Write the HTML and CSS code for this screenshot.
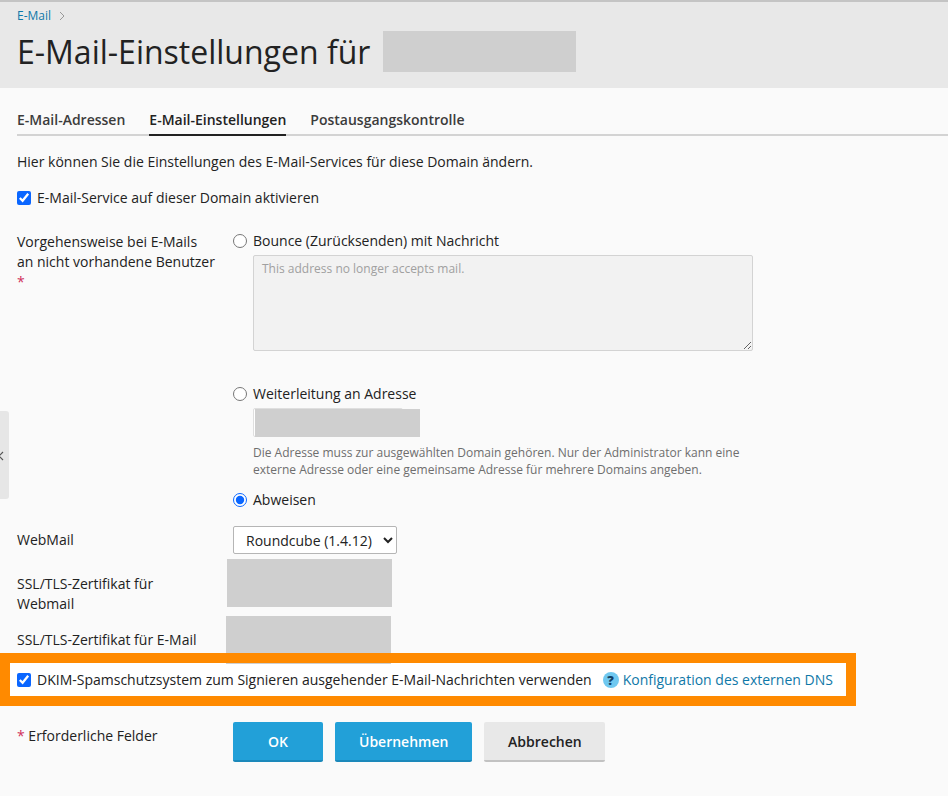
FILE: index.html
```html
<!DOCTYPE html>
<html lang="de">
<head>
<meta charset="utf-8">
<title>E-Mail-Einstellungen</title>
<link rel="stylesheet" href="styles.css">
</head>
<body>
<header class="head">
  <nav class="crumbs"><a href="#">E-Mail</a><svg class="chev" width="6" height="10" viewBox="0 0 6 10"><path d="M1 1 5 5 1 9" fill="none" stroke="#999" stroke-width="1"/></svg></nav>
  <div class="title-row"><h1>E-Mail-Einstellungen für</h1><span class="redact redact-title"></span></div>
</header>
<div class="side-handle"><svg width="6" height="10" viewBox="0 0 6 10"><path d="M3 1 -1 5l4 4" fill="none" stroke="#555" stroke-width="1.200"/></svg></div>
<main class="content">
  <div class="tabs">
    <a class="tab" href="#">E-Mail-Adressen</a>
    <a class="tab active" href="#">E-Mail-Einstellungen</a>
    <a class="tab" href="#">Postausgangskontrolle</a>
  </div>
  <p class="intro">Hier können Sie die Einstellungen des E-Mail-Services für diese Domain ändern.</p>
  <label class="check-line"><input type="checkbox" checked><span>E-Mail-Service auf dieser Domain aktivieren</span></label>

  <div class="row row-policy">
    <div class="label">Vorgehensweise bei E-Mails an nicht vorhandene Benutzer <span class="req req-block">*</span></div>
    <div class="field">
      <label class="radio"><input type="radio" name="p"><span>Bounce (Zurücksenden) mit Nachricht</span></label>
      <textarea class="msg" disabled placeholder="This address no longer accepts mail."></textarea>
      <label class="radio radio-fwd"><input type="radio" name="p"><span>Weiterleitung an Adresse</span></label>
      <div class="addr"><div class="redact redact-addr"></div></div>
      <p class="hint">Die Adresse muss zur ausgewählten Domain gehören. Nur der Administrator kann eine externe Adresse oder eine gemeinsame Adresse für mehrere Domains angeben.</p>
      <label class="radio radio-rej"><input type="radio" name="p" checked><span>Abweisen</span></label>
    </div>
  </div>

  <div class="row row-webmail">
    <div class="label">WebMail</div>
    <div class="field"><select class="select"><option>Roundcube (1.4.12)</option></select></div>
  </div>
  <div class="row row-ssl1">
    <div class="label">SSL/TLS-Zertifikat für Webmail</div>
    <div class="field"><div class="redact redact-ssl1"></div></div>
  </div>
  <div class="row row-ssl2">
    <div class="label">SSL/TLS-Zertifikat für E-Mail</div>
    <div class="field"><div class="redact redact-ssl2"></div></div>
  </div>

  <div class="dkim">
    <label class="check-line"><input type="checkbox" checked><span>DKIM-Spamschutzsystem zum Signieren ausgehender E-Mail-Nachrichten verwenden</span></label>
    <span class="help">?</span><a class="dns" href="#">Konfiguration des externen DNS</a>
  </div>

  <div class="row row-actions">
    <div class="label"><span class="req">*</span> Erforderliche Felder</div>
    <div class="buttons">
      <button class="btn primary ok">OK</button>
      <button class="btn primary">Übernehmen</button>
      <button class="btn cancel">Abbrechen</button>
    </div>
  </div>
</main>
</body>
</html>
```
FILE: styles.css
```css
* { box-sizing: border-box; }
html, body { margin: 0; padding: 0; }
body {
  width: 948px; height: 796px; overflow: hidden; position: relative;
  background: #fafafa; color: #222;
  font: 14px/20px "Open Sans", sans-serif;
}
a { color: #0f78a8; text-decoration: none; }
.head {
  height: 88px; background: #e8e8e8; border-top: 2px solid #c4c4c4;
  padding: 6px 17px 0;
}
.crumbs { display: flex; align-items: center; gap: 8px; font-size: 12px; line-height: 16px; height: 16px; }
.title-row { display: flex; align-items: flex-start; margin-top: 7px; }
h1 { margin: 0; font-size: 32px; line-height: 41px; font-weight: 400; color: #222; white-space: nowrap; }
.redact { background: #cfcfcf; }
.redact-title { width: 193px; height: 41px; margin-left: 13px; }
.side-handle {
  position: absolute; left: 0; top: 411px; width: 9px; height: 88px;
  background: #e6e6e6; border-radius: 0 3px 3px 0;
  display: flex; align-items: center;
}
.side-handle svg { margin-left: 0; margin-top: 2px; }
.content { padding-top: 20px; }
.tabs {
  display: flex; gap: 24px; margin: 0 0 0 17px; height: 28px;
  border-bottom: 2px solid #d3d3d3;
}
.tab {
  height: 28px; color: #3c3c3c; font-weight: 600; font-size: 14px; line-height: 24px;
  white-space: nowrap;
}
.tab.active { color: #222; border-bottom: 2px solid #222; }
.intro { margin: 16px 17px 0; height: 20px; }
.check-line { display: flex; align-items: center; gap: 6px; white-space: nowrap; }
input[type=checkbox] { margin: 0; width: 14px; height: 14px; flex: none; accent-color: #0a66ff; }
.content > .check-line { margin: 16px 17px 0; }
.row { display: grid; grid-template-columns: 216px 1fr; padding-left: 17px; }
.label { width: 199px; }
.row-policy { margin-top: 23px; }
.row-policy .label { padding-top: 1px; }
.req { color: #d0315c; }
.req-block { display: block; }
.radio { display: flex; align-items: center; gap: 6px; height: 20px; white-space: nowrap; }
input[type=radio] { margin: 0; width: 14px; height: 14px; flex: none; accent-color: #0a66ff; }
.msg {
  display: block; width: 500px; height: 96px; margin: 4px 0 0 20px; padding: 5px 8px;
  background: #f2f2f2; border: 1px solid #d3d3d3; border-radius: 2px;
  font: 12px/16px "Open Sans", sans-serif; color: #8a8a8a;
}
.msg::placeholder { color: #a0a0a0; opacity: 1; }
.radio-fwd { margin-top: 33px; }
.addr {
  position: relative; width: 150px; height: 29px; margin: 4px 0 0 20px;
  background: #fff; border: 1px solid #dfdfdf; border-radius: 2px;
}
.redact-addr { position: absolute; left: 1px; top: 0; width: 165px; height: 28px; }
.hint { margin: 7px 0 0 20px; width: 500px; font-size: 12px; line-height: 17px; color: #6e6e6e; }
.radio-rej { margin-top: 12px; }
.row-webmail { margin-top: 16px; height: 28px; }
.row-webmail .label { padding-top: 4px; }
.select {
  width: 164px; height: 28px; padding: 0 0 0 8px; margin: 0;
  background: #fff; border: 1px solid #b5b5b5; border-radius: 2px;
  font: 14px "Open Sans", sans-serif; color: #222;
}
.row-ssl1 { margin-top: 5px; height: 48px; }
.row-ssl1 .label { padding-top: 15px; width: 170px; }
.redact-ssl1 { width: 165px; height: 48px; margin-left: -6px; }
.row-ssl2 { margin-top: 9px; height: 37px; }
.row-ssl2 .label { padding-top: 14px; white-space: nowrap; }
.redact-ssl2 { width: 165px; height: 48px; margin-left: -7px; }
.dkim {
  position: relative; display: flex; align-items: center;
  width: 856px; height: 53px; border: 10px solid #ff8a00; background: #fff;
  padding-left: 7px;
}
.dkim::before {
  content: ""; position: absolute; left: 216px; top: 0; width: 165px; height: 1px; background: #cfcfcf;
}
.help {
  width: 16px; height: 16px; border-radius: 50%; margin: 0 4px 0 11px; flex: none;
  background: #6fc8f0; color: #123f66; font-size: 13px; line-height: 16px; font-weight: 800; text-align: center;
}
.dns { white-space: nowrap; }
.row-actions { margin-top: 16px; }
.row-actions .label { padding-top: 4px; }
.buttons { display: flex; gap: 12px; }
.btn {
  height: 40px; padding: 0 24px; border: 0; border-bottom: 2px solid #c2c2c2; border-radius: 2px;
  background: #e8e8e8; color: #222; font: 600 14px "Open Sans", sans-serif;
}
.btn.primary { background: #22a0d8; border-bottom-color: #1b88ba; color: #fff; }
.btn.ok { width: 90px; padding: 0; }
.btn.cancel { width: 121px; padding: 0; }
```
